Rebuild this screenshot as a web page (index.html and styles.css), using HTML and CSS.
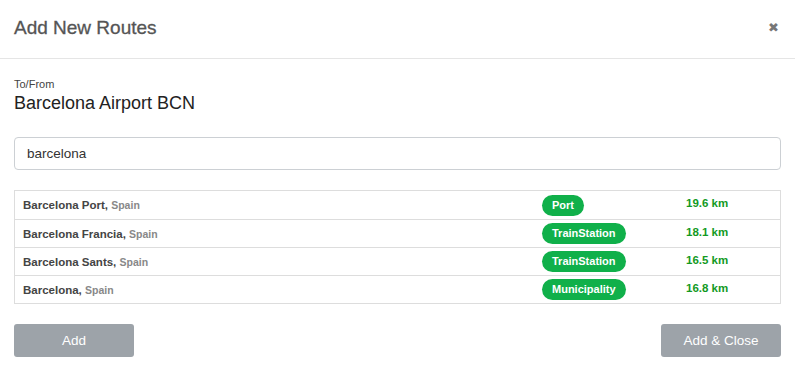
FILE: index.html
```html
<!DOCTYPE html>
<html lang="en">
<head>
    <meta charset="UTF-8">
    <meta name="viewport" content="width=device-width, initial-scale=1.0">
    <title>Add New Routes</title>
    <link rel="stylesheet" href="styles.css">
</head>
<body>

    <div class="modal">
        <div class="modal-header">
            <h1 class="modal-title">Add New Routes</h1>
            <button class="close" type="button">&#10006;</button>
        </div>

        <div class="modal-body">
            <div class="label">To/From</div>
            <div class="origin">Barcelona Airport BCN</div>

            <input class="search" type="text" value="barcelona">

            <!-- Results -->
            <div class="results">
                <div class="row">
                    <div class="name">Barcelona Port, <span class="country">Spain</span></div>
                    <div class="type"><span class="badge">Port</span></div>
                    <div class="dist">19.6 km</div>
                </div>
                <div class="row">
                    <div class="name">Barcelona Francia, <span class="country">Spain</span></div>
                    <div class="type"><span class="badge">TrainStation</span></div>
                    <div class="dist">18.1 km</div>
                </div>
                <div class="row">
                    <div class="name">Barcelona Sants, <span class="country">Spain</span></div>
                    <div class="type"><span class="badge">TrainStation</span></div>
                    <div class="dist">16.5 km</div>
                </div>
                <div class="row">
                    <div class="name">Barcelona, <span class="country">Spain</span></div>
                    <div class="type"><span class="badge">Municipality</span></div>
                    <div class="dist">16.8 km</div>
                </div>
            </div>

            <div class="actions">
                <button class="btn" type="button">Add</button>
                <button class="btn" type="button">Add &amp; Close</button>
            </div>
        </div>
    </div>

</body>
</html>
```

FILE: styles.css
```css
body {
    font-family: "Liberation Sans", Arial, sans-serif;
    background-color: #fff;
    margin: 0;
    color: #333;
}

/* Header */
.modal-header {
    display: flex;
    justify-content: space-between;
    align-items: flex-start;
    height: 59px;
    padding: 17px 16px 0 14px;
    box-sizing: border-box;
    border-bottom: 1px solid #e5e5e5;
}

.modal-title {
    margin: 0;
    font-size: 19px;
    font-weight: normal;
    color: #555;
    line-height: 22px;
    -webkit-text-stroke: 0.3px #555; /* a touch heavier, like a medium weight */
}

.close {
    border: none;
    background: none;
    padding: 0;
    margin-top: 4px;
    font-size: 13px;
    line-height: 13px;
    color: #777;
    cursor: pointer;
}

/* Body */
.modal-body {
    padding: 19px 14px 0;
}

.label {
    font-size: 11px;
    color: #444;
    line-height: 13px;
}

.origin {
    font-size: 18px;
    color: #222;
    line-height: 22px;
    margin-top: 1px;
}

.search {
    display: block;
    width: 100%;
    box-sizing: border-box;
    height: 33px;
    margin-top: 23px;
    padding: 0 12px;
    border: 1px solid #ccd0d4;
    border-radius: 4px;
    font-family: inherit;
    font-size: 13.5px;
    color: #333;
}

/* Results table */
.results {
    margin-top: 20px;
    border: 1px solid #ddd;
}

.row {
    display: grid;
    grid-template-columns: 519px 144px 1fr;
    padding-left: 8px;
    height: 27px;
    align-items: center;
    border-top: 1px solid #ddd;
}

.row:first-child {
    border-top: none;
    height: 28px;
}

.name {
    font-size: 11.5px;
    font-weight: bold;
    color: #444;
}

.country {
    font-size: 10.5px;
    color: #888;
}

.badge {
    display: inline-block;
    background-color: #10b04a;
    color: #fff;
    font-size: 11px;
    font-weight: bold;
    line-height: 21px;
    padding: 0 10px;
    border-radius: 11px;
}

.dist {
    font-size: 11.5px;
    font-weight: bold;
    color: #139a1f;
    margin-top: -4px;
}

/* Footer buttons */
.actions {
    display: flex;
    justify-content: space-between;
    margin-top: 20px;
}

.btn {
    width: 120px;
    height: 33px;
    border: none;
    border-radius: 3px;
    background-color: #9da3a9;
    color: #fff;
    font-family: inherit;
    font-size: 13.5px;
    cursor: pointer;
}
```
